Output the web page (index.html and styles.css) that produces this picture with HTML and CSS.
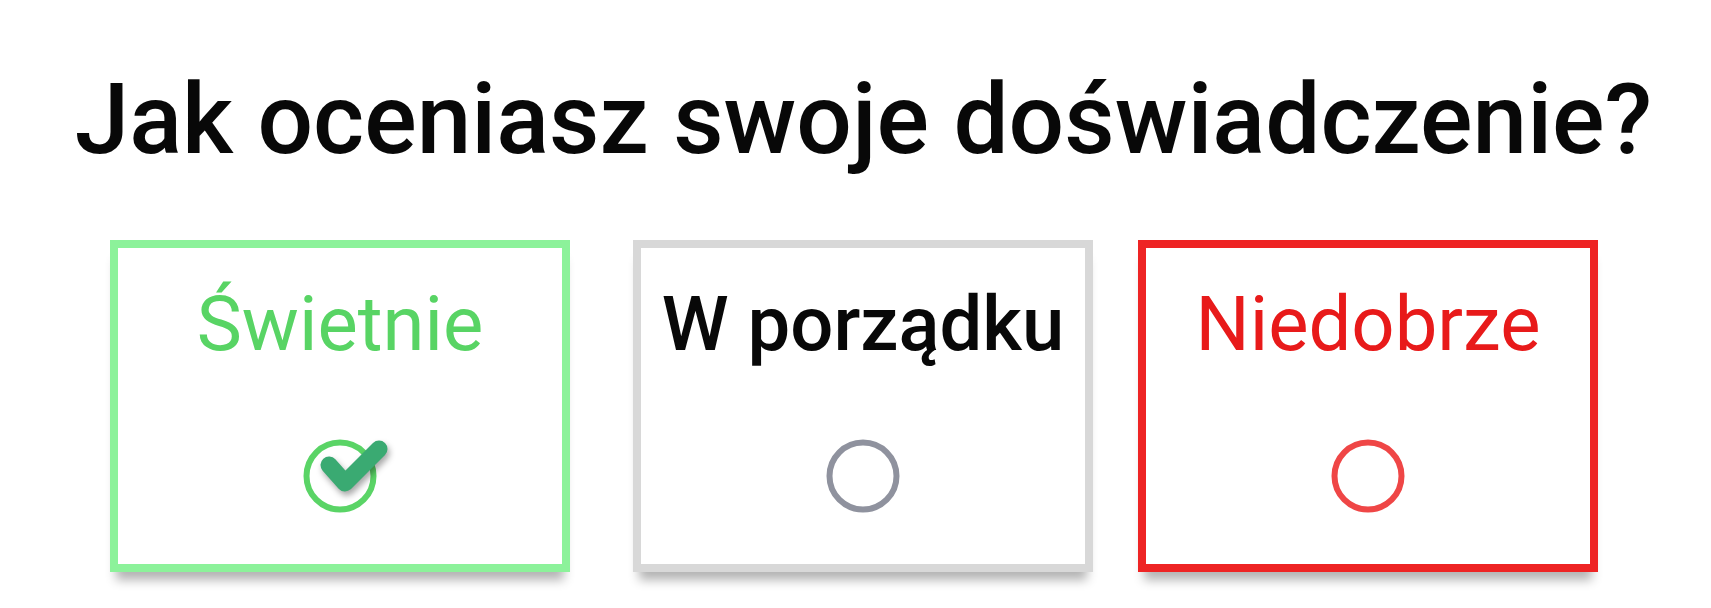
FILE: index.html
```html
<!DOCTYPE html>
<html lang="pl">
<head>
	<meta charset="utf-8">
	<title>Ocena</title>
	<link rel="stylesheet" href="styles.css">
</head>
<body>
	<div class="survey">
		<h1 class="survey_title">Jak oceniasz swoje doświadczenie?</h1>

		<div class="choices">
			<div class="choice choice_good">
				<span class="choice_label">Świetnie</span>
				<svg class="choice_mark" width="74" height="74" viewBox="0 0 74 74">
					<circle cx="37" cy="37" r="33.5" fill="none" stroke="#5ad466" stroke-width="6"/>
					<path class="tick" d="M26 26 L42 44 L76 10" fill="none" stroke="#3aaa72" stroke-width="17" stroke-linecap="round" stroke-linejoin="round"/>
				</svg>
			</div>

			<div class="choice choice_ok">
				<span class="choice_label">W porządku</span>
				<svg class="choice_mark" width="74" height="74" viewBox="0 0 74 74">
					<circle cx="37" cy="37" r="33.5" fill="none" stroke="#8f929e" stroke-width="6"/>
				</svg>
			</div>

			<div class="choice choice_bad">
				<span class="choice_label">Niedobrze</span>
				<svg class="choice_mark" width="74" height="74" viewBox="0 0 74 74">
					<circle cx="37" cy="37" r="33.5" fill="none" stroke="#ef4646" stroke-width="6"/>
				</svg>
			</div>
		</div>
	</div>
</body>
</html>
```

FILE: styles.css
```css
body {
	margin: 0;
	background: #FFFFFF;
	font-family: Roboto, "Liberation Sans", sans-serif;
}

.survey {
	width: 1711px;
	height: 608px;
	overflow: hidden;
}

.survey_title {
	margin: 0;
	padding-top: 60px;
	padding-left: 16px;
	height: 240px;
	box-sizing: border-box;
	text-align: center;
	font-size: 98px;
	font-weight: 500;
	line-height: 120px;
	color: #080808;
}

.choices {
	display: flex;
	padding-left: 110px;
}

.choice {
	width: 460px;
	height: 332px;
	box-sizing: border-box;
	border: 8px solid #d8d8d8;
	background: #FFFFFF;
	display: flex;
	flex-direction: column;
	align-items: center;
	padding-top: 26px;
	box-shadow: 0 14px 10px -6px rgba(0, 0, 0, 0.3);
}

.choice + .choice {
	margin-left: 45px;
}

.choice_good {
	border-color: #8cf29a;
	margin-right: 18px;
}

.choice_bad {
	border-color: #ee2424;
}

.choice_label {
	font-size: 76px;
	line-height: 100px;
	font-weight: 500;
	color: #080808;
}

.choice_good .choice_label {
	color: #58d464;
	font-weight: 400;
}

.choice_bad .choice_label {
	color: #e81a1a;
	font-weight: 400;
}

.choice_mark {
	margin-top: 65px;
	overflow: visible;
}

.tick {
	filter: drop-shadow(2px 4px 3px rgba(0, 0, 0, 0.35));
}
```
